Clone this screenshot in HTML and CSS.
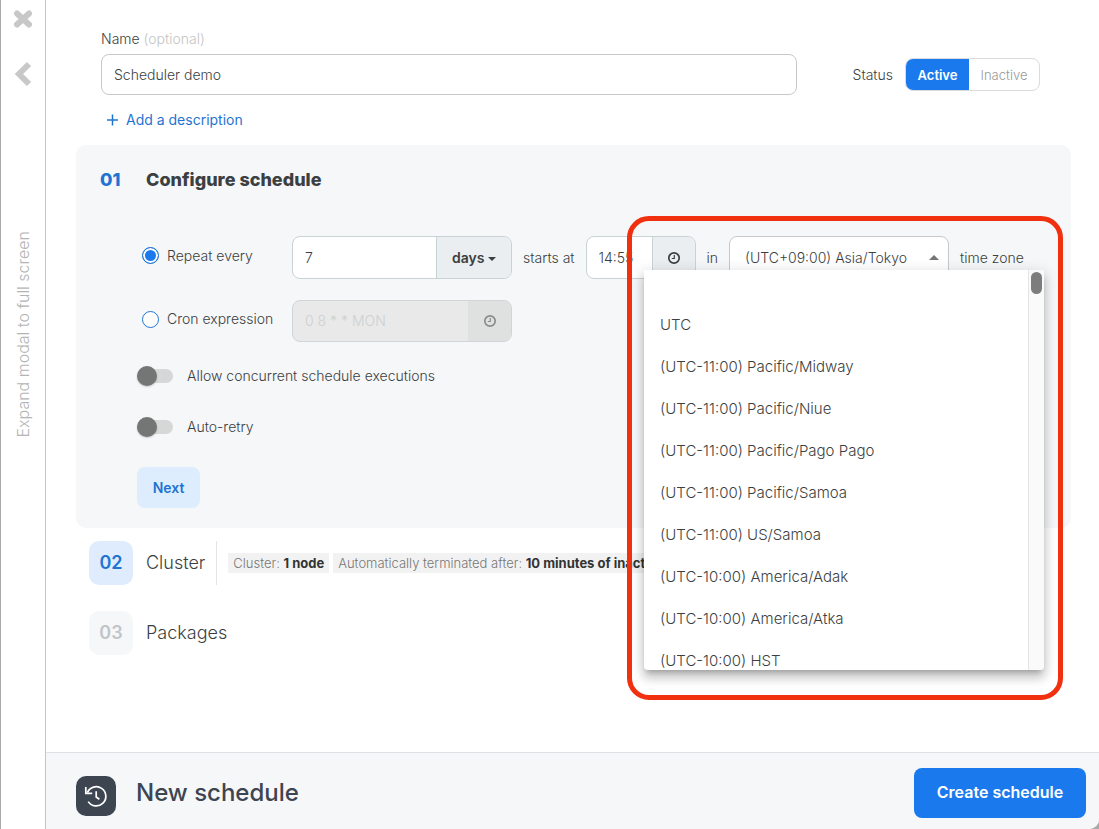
FILE: index.html
```html
<!DOCTYPE html>
<html lang="en">
<head>
    <meta charset="UTF-8">
    <meta name="viewport" content="width=device-width, initial-scale=1.0">
    <title>New schedule</title>
    <link rel="stylesheet" href="styles.css">
</head>
<body>

<div class="modal">
    <aside class="rail">
        <button class="rail-btn" aria-label="Close">
            <svg width="20" height="20" viewBox="0 0 20 20"><path d="M4 4.5L16 15.5M16 4.5L4 15.5" stroke="currentColor" stroke-width="6" stroke-linecap="round"/></svg>
        </button>
        <button class="rail-btn collapse" aria-label="Back">
            <svg width="18" height="26" viewBox="0 0 18 26"><path d="M15 3L5 13L15 23" fill="none" stroke="currentColor" stroke-width="6"/></svg>
        </button>
        <button class="expand">Expand modal to full screen</button>
    </aside>

    <div class="page">
        <main>
            <div class="header">
                <div class="name-box">
                    <label for="name">Name <span class="muted">(optional)</span></label>
                    <input type="text" id="name" value="Scheduler demo">
                </div>
                <div class="status">
                    <span>Status</span>
                    <div class="switch">
                        <button class="active">Active</button><button>Inactive</button>
                    </div>
                </div>
            </div>
            <button class="add">
                <svg width="13" height="13" viewBox="0 0 13 13"><path d="M6.5 0.5V11.5M1 6H12" stroke="currentColor" stroke-width="1.5"/></svg>
                Add a description
            </button>

            <section class="panel">
                <h2><span class="num">01</span>Configure schedule</h2>

                <div class="row">
                    <label class="radio"><input type="radio" name="mode" checked>Repeat every</label>
                    <div class="group">
                        <input type="text" value="7" aria-label="Interval">
                        <div class="unit">
                            <select aria-label="Unit"><option>days</option><option>hours</option><option>weeks</option></select>
                        </div>
                    </div>
                    <label for="time">starts at</label>
                    <div class="group time">
                        <input type="text" id="time" value="14:55">
                        <button class="clock" aria-label="Pick time">
                            <svg width="14" height="14" viewBox="0 0 14 14"><circle cx="7" cy="7" r="5.2" fill="none" stroke="currentColor" stroke-width="1.7"/><path d="M7.3 4V7.5H4.8" fill="none" stroke="currentColor" stroke-width="1.2"/></svg>
                        </button>
                    </div>
                    <label for="zone">in</label>
                    <div class="zone">
                        <select id="zone"><option>(UTC+09:00) Asia/Tokyo</option></select>
                        <div class="menu">
                            <ul>
                                <li></li>
                                <li>UTC</li>
                                <li>(UTC-11:00) Pacific/Midway</li>
                                <li>(UTC-11:00) Pacific/Niue</li>
                                <li>(UTC-11:00) Pacific/Pago Pago</li>
                                <li>(UTC-11:00) Pacific/Samoa</li>
                                <li>(UTC-11:00) US/Samoa</li>
                                <li>(UTC-10:00) America/Adak</li>
                                <li>(UTC-10:00) America/Atka</li>
                                <li>(UTC-10:00) HST</li>
                            </ul>
                            <div class="track"><div class="thumb"></div></div>
                        </div>
                        <div class="highlight"></div>
                    </div>
                    <span>time zone</span>
                </div>

                <div class="row cron">
                    <label class="radio"><input type="radio" name="mode">Cron expression</label>
                    <div class="group off">
                        <input type="text" placeholder="0 8 * * MON" aria-label="Cron expression" disabled>
                        <button class="clock" aria-label="Pick cron" disabled>
                            <svg width="14" height="14" viewBox="0 0 14 14"><circle cx="7" cy="7" r="5.2" fill="none" stroke="currentColor" stroke-width="1.7"/><path d="M7.3 4V7.5H4.8" fill="none" stroke="currentColor" stroke-width="1.2"/></svg>
                        </button>
                    </div>
                </div>

                <label class="toggle"><input type="checkbox">Allow concurrent schedule executions</label>
                <label class="toggle"><input type="checkbox">Auto-retry</label>

                <button class="next">Next</button>
            </section>

            <div class="step current">
                <span class="badge">02</span>
                <h3>Cluster</h3>
                <div class="tags">
                    <span class="tag">Cluster: <b>1 node</b></span>
                    <span class="tag">Automatically terminated after: <b>10 minutes of inactivity</b></span>
                </div>
            </div>
            <div class="step">
                <span class="badge">03</span>
                <h3>Packages</h3>
            </div>
        </main>

        <footer>
            <span class="logo">
                <svg width="26" height="26" viewBox="0 0 26 26" fill="none" stroke="#fff" stroke-width="1.7"><path d="M4.4 9.6A9.6 9.6 0 1 1 5.2 18.6"/><path d="M2.8 4V10.4H9.2"/><path d="M13.2 8.2V14L16.4 16.2"/></svg>
            </span>
            <h1>New schedule</h1>
            <button class="create">Create schedule</button>
        </footer>
    </div>
</div>

</body>
</html>
```
FILE: styles.css
```css
* { box-sizing: border-box; }
body { margin: 0; padding-left: 1px; background: #aaa; color: #3c3f42; font-family: Inter, sans-serif; font-size: 14px; font-weight: 300; line-height: 20px; }
button, input, select { font: inherit; color: inherit; }
button { padding: 0; border: none; background: none; cursor: pointer; }
h1, h2, h3 { margin: 0; }
svg { display: block; }

.modal { display: flex; min-height: 100vh; background: #fff; border-bottom-right-radius: 10px; overflow: hidden; }
.rail { display: flex; flex-direction: column; align-items: center; width: 45px; flex: none; padding-top: 9px; border-right: 1px solid #c4c4c4; color: #c8c8c8; }
.rail-btn.collapse { margin-top: 32px; }
.expand { writing-mode: vertical-rl; transform: rotate(180deg); margin-top: 144px; font-size: 16px; color: #b4b4b4; }

.page { flex: 1; min-width: 0; display: flex; flex-direction: column; }
main { flex: 1; padding: 29px 28px 0 30px; }
.header { display: flex; align-items: flex-end; padding: 0 31px 0 25px; }
.name-box { flex: 1; }
.name-box label { display: block; margin-bottom: 5px; }
.name-box .muted { color: #c4c4c4; }
.name-box input { display: block; width: 100%; height: 41px; padding: 0 12px; border: 1px solid #c6c9cb; border-radius: 8px; background: #fff; }
.status { display: flex; align-items: center; gap: 12px; height: 41px; margin-left: 56px; }
.switch { display: flex; height: 33px; border: 1px solid #d9dbdd; border-radius: 8px; overflow: hidden; font-size: 13px; }
.switch button { width: 70px; color: #999; }
.switch .active { width: 63px; background: #1a7aed; color: #fff; font-weight: 600; }
.add { display: flex; align-items: center; gap: 7px; margin: 15px 0 0 30px; color: #1f74d2; font-weight: 400; }

.panel { margin-top: 15px; padding: 21px 24px 20px; background: #f5f7f8; border-radius: 10px; }
.panel h2 { display: flex; font-size: 18px; line-height: 28px; font-weight: 800; }
.num { width: 46px; color: #1f74d2; }
.row { display: flex; align-items: center; gap: 11px; margin: 42px 0 0 37px; height: 43px; white-space: nowrap; }
.row.cron { margin-top: 21px; height: 42px; }
.radio { display: flex; align-items: center; gap: 8px; width: 144px; padding: 0 0 4px 5px; }
.radio input { appearance: none; width: 17px; height: 17px; margin: 0; border: 1px solid #1f74d2; border-radius: 50%; background: #fff; }
.radio input:checked { background: #1a7aed; box-shadow: inset 0 0 0 2px #fff; }
.group { display: flex; width: 220px; height: 100%; border: 1px solid #c9d2d4; border-radius: 8px; overflow: hidden; background: #fff; }
.group input { flex: 1; min-width: 0; padding: 0 12px; border: none; background: none; }
.group.time { width: 110px; }
.unit, .clock { border-left: 1px solid #c9d2d4; background: #ebeef0; }
.unit { position: relative; width: 75px; }
.unit select { appearance: none; width: 100%; height: 100%; padding: 0 15px; border: none; background: none; font-weight: 600; }
.unit::after { content: ""; position: absolute; right: 15px; top: 20px; border: 4px solid transparent; border-top-color: #3c3f42; border-bottom: none; pointer-events: none; }
.clock { display: flex; align-items: center; justify-content: center; width: 43px; }
.group.off { background: #e9e9e9; border-color: #d0d6d7; }
.group.off input::placeholder { color: #cdd0d1; opacity: 1; }
.group.off .clock { border: none; background: #dfe0e0; color: #8b8b8b; }

.zone { position: relative; width: 220px; height: 100%; }
.zone select { appearance: none; width: 100%; height: 100%; padding: 0 15px; border: 1px solid #c6c9cb; border-radius: 8px; background: #fff; }
.zone::after { content: ""; position: absolute; right: 10px; top: 19px; border: 5px solid transparent; border-bottom-color: #757575; border-top: none; }
.menu { position: absolute; z-index: 2; top: 34px; left: -85px; display: flex; width: 400px; height: 400px; overflow: hidden; background: #fff; border-radius: 0 0 4px 4px; box-shadow: 0 5px 5px -3px rgba(0, 0, 0, 0.2), 0 8px 10px 1px rgba(0, 0, 0, 0.14), 0 3px 14px 2px rgba(0, 0, 0, 0.12); }
.menu ul { flex: 1; margin: 0; padding: 0; list-style: none; font-size: 15px; }
.menu li { height: 42px; padding: 0 16px; line-height: 42px; }
.menu li:first-child { height: 34px; }
.track { width: 16px; padding: 2px; border-left: 1px solid #e4e4e4; background: #fafafa; }
.thumb { width: 11px; height: 22px; border-radius: 6px; background: #7d7d7d; }
.highlight { position: absolute; z-index: 3; top: -20px; left: -102px; width: 436px; height: 484px; border: 5px solid #f0300f; border-radius: 22px; pointer-events: none; }

.toggle { display: flex; align-items: center; gap: 14px; width: max-content; height: 24px; margin: 22px 0 0 37px; }
.toggle + .toggle { margin-top: 27px; }
.toggle input { appearance: none; position: relative; width: 36px; height: 14px; margin: 0; border-radius: 7px; background: #d6d8d8; }
.toggle input::before { content: ""; position: absolute; top: -3px; left: 0; width: 20px; height: 20px; border-radius: 50%; background: #747575; box-shadow: 0 1px 2px rgba(0, 0, 0, 0.2); }
.next { display: block; width: 63px; height: 41px; margin: 28px 0 0 37px; border-radius: 8px; background: #deedfd; color: #1f74d2; font-weight: 600; }

.step { display: flex; align-items: center; height: 44px; margin: 26px 0 0 13px; }
.step.current { margin-top: 13px; }
.badge { width: 44px; line-height: 44px; border-radius: 10px; background: #f5f7f8; color: #c1c5c9; font-size: 18px; font-weight: 600; text-align: center; }
.current .badge { background: #deecfd; color: #1f74d2; }
.step h3 { margin-left: 13px; font-size: 18px; font-weight: 300; }
.tags { display: flex; flex: 1; align-items: center; gap: 4px; min-width: 0; height: 44px; margin-left: 11px; padding-left: 11px; border-left: 1px solid #e2e4e6; overflow: hidden; }
.tag { padding: 0 5px; background: #f2f2f2; color: #777; font-size: 13px; white-space: nowrap; }
.tag b { color: #333; font-weight: 700; }

footer { display: flex; align-items: center; padding: 15px 13px 11px 30px; border-top: 1px solid #dfe2e5; background: #f5f7f8; }
.logo { display: flex; align-items: center; justify-content: center; width: 40px; height: 40px; margin-top: 6px; border-radius: 10px; background: #3d4551; }
footer h1 { flex: 1; margin-left: 20px; color: #3d4551; font-size: 24px; line-height: 32px; font-weight: 500; }
.create { width: 172px; height: 50px; padding-bottom: 2px; border-radius: 8px; background: #1a7aed; color: #fff; font-size: 16px; font-weight: 600; }
```
